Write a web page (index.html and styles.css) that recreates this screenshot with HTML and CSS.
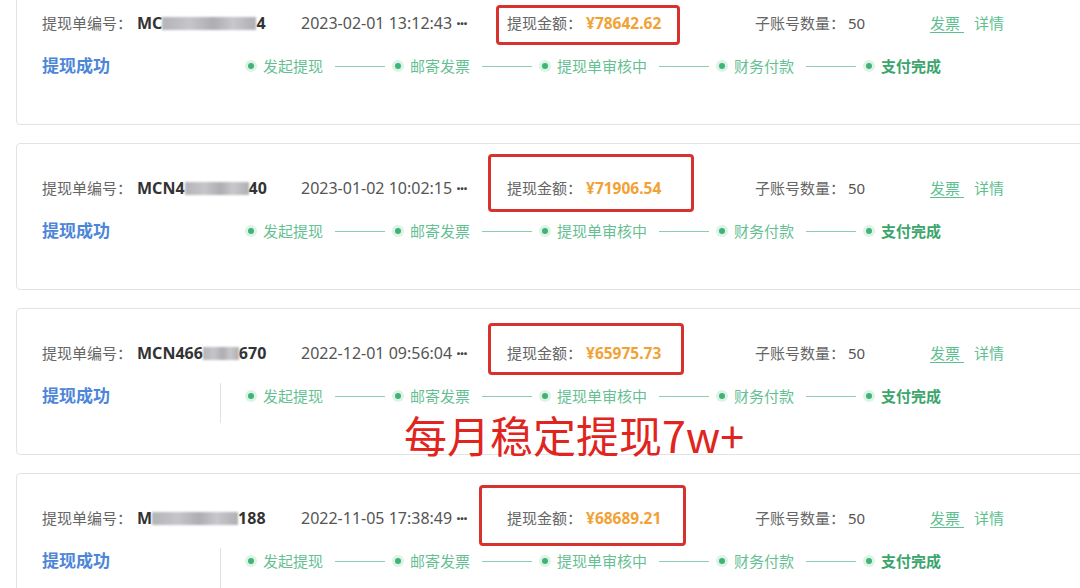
FILE: index.html
```html
<!DOCTYPE html>
<html lang="zh-CN">
<head>
  <meta charset="UTF-8" />
  <meta name="viewport" content="width=device-width, initial-scale=1.0"/>
  <title>提现记录</title>
  <link rel="stylesheet" href="styles.css">
</head>
<body>

<div class="list">

  <div class="card">
    <div class="info">
      <div class="cell no"><span class="label">提现单编号：</span><span class="val">MC<i class="mask mask-1"></i>4</span></div>
      <div class="cell time">2023-02-01 13:12:43 <span class="more">···</span></div>
      <div class="cell amount mark-1"><span class="label">提现金额：</span><span class="money">¥78642.62</span></div>
      <div class="cell subs"><span class="label">子账号数量：</span>50</div>
      <div class="cell ops"><a class="link under">发票 </a><a class="link">详情</a></div>
    </div>
    <div class="status">
      <div class="state">提现成功</div>
      <div class="steps">
        <span class="dot"></span><span class="step">发起提现</span><span class="line"></span>
        <span class="dot"></span><span class="step">邮寄发票</span><span class="line"></span>
        <span class="dot"></span><span class="step">提现单审核中</span><span class="line"></span>
        <span class="dot"></span><span class="step">财务付款</span><span class="line"></span>
        <span class="dot"></span><span class="step done">支付完成</span>
      </div>
    </div>
  </div>

  <div class="card">
    <div class="info">
      <div class="cell no"><span class="label">提现单编号：</span><span class="val">MCN4<i class="mask mask-2"></i>40</span></div>
      <div class="cell time">2023-01-02 10:02:15 <span class="more">···</span></div>
      <div class="cell amount mark-2"><span class="label">提现金额：</span><span class="money">¥71906.54</span></div>
      <div class="cell subs"><span class="label">子账号数量：</span>50</div>
      <div class="cell ops"><a class="link under">发票 </a><a class="link">详情</a></div>
    </div>
    <div class="status">
      <div class="state">提现成功</div>
      <div class="steps">
        <span class="dot"></span><span class="step">发起提现</span><span class="line"></span>
        <span class="dot"></span><span class="step">邮寄发票</span><span class="line"></span>
        <span class="dot"></span><span class="step">提现单审核中</span><span class="line"></span>
        <span class="dot"></span><span class="step">财务付款</span><span class="line"></span>
        <span class="dot"></span><span class="step done">支付完成</span>
      </div>
    </div>
  </div>

  <div class="card split">
    <div class="info">
      <div class="cell no"><span class="label">提现单编号：</span><span class="val">MCN466<i class="mask mask-3"></i>670</span></div>
      <div class="cell time">2022-12-01 09:56:04 <span class="more">···</span></div>
      <div class="cell amount mark-3"><span class="label">提现金额：</span><span class="money">¥65975.73</span></div>
      <div class="cell subs"><span class="label">子账号数量：</span>50</div>
      <div class="cell ops"><a class="link under">发票 </a><a class="link">详情</a></div>
    </div>
    <div class="status">
      <div class="state">提现成功</div>
      <div class="steps">
        <span class="dot"></span><span class="step">发起提现</span><span class="line"></span>
        <span class="dot"></span><span class="step">邮寄发票</span><span class="line"></span>
        <span class="dot"></span><span class="step">提现单审核中</span><span class="line"></span>
        <span class="dot"></span><span class="step">财务付款</span><span class="line"></span>
        <span class="dot"></span><span class="step done">支付完成</span>
      </div>
    </div>
    <div class="slogan">每月稳定提现7w+</div>
  </div>

  <div class="card split">
    <div class="info">
      <div class="cell no"><span class="label">提现单编号：</span><span class="val">M<i class="mask mask-4"></i>188</span></div>
      <div class="cell time">2022-11-05 17:38:49 <span class="more">···</span></div>
      <div class="cell amount mark-4"><span class="label">提现金额：</span><span class="money">¥68689.21</span></div>
      <div class="cell subs"><span class="label">子账号数量：</span>50</div>
      <div class="cell ops"><a class="link under">发票 </a><a class="link">详情</a></div>
    </div>
    <div class="status">
      <div class="state">提现成功</div>
      <div class="steps">
        <span class="dot"></span><span class="step">发起提现</span><span class="line"></span>
        <span class="dot"></span><span class="step">邮寄发票</span><span class="line"></span>
        <span class="dot"></span><span class="step">提现单审核中</span><span class="line"></span>
        <span class="dot"></span><span class="step">财务付款</span><span class="line"></span>
        <span class="dot"></span><span class="step done">支付完成</span>
      </div>
    </div>
  </div>

</div>

</body>
</html>
```

FILE: styles.css
```css
html, body {
  height: 100%;
}

body {
  margin: 0;
  padding: 0;
  background: #fff;
  font-family: "Noto Sans", "Noto Sans CJK SC", sans-serif;
  font-size: 15px;
  color: #555;
  overflow: hidden;
}

.list {
  display: flex;
  flex-direction: column;
  gap: 18px;
  margin-top: -22px;
  padding-left: 16px;
}

.card {
  position: relative;
  width: 1100px;
  height: 147px;
  box-sizing: border-box;
  border: 1px solid #e3e3e3;
  border-radius: 4px;
  padding: 33px 0 0 25px;
}

.info {
  display: flex;
  align-items: center;
  height: 22px;
  line-height: 22px;
  white-space: nowrap;
}

.cell {
  position: relative;
  flex: none;
}

.no { width: 259px; }
.time { width: 206px; color: #555; font-size: 16px; }
.amount { width: 248px; }
.subs { width: 175px; }

.more {
  font-weight: 700;
  letter-spacing: -1px;
  color: #444;
}

.label {
  color: #666;
}

.no .label { margin-right: 5px; }
.amount .label { margin-right: 4px; }
.subs .label { margin-right: 3px; }

.val {
  font-weight: 700;
  color: #333;
  font-size: 16px;
}

.mask {
  display: inline-block;
  height: 13px;
  vertical-align: -1px;
  background: linear-gradient(to right, #b4b4b8, #c6c6ca 30%, #adadb2 55%, #c8c8cc 75%, #b0b0b4);
  filter: blur(1px);
}

.mask-1 { width: 94px; }
.mask-2 { width: 64px; }
.mask-3 { width: 36px; }
.mask-4 { width: 86px; }

.money {
  font-weight: 700;
  font-size: 15.5px;
  color: #f2a134;
}

/* red annotation boxes */
.amount::after {
  content: "";
  position: absolute;
  border: 3px solid #d8322e;
  border-radius: 4px;
  box-sizing: border-box;
}

.mark-1::after { left: -11px; top: -7px; width: 184px; height: 40px; }
.mark-2::after { left: -19px; top: -23px; width: 206px; height: 58px; }
.mark-3::after { left: -19px; top: -19px; width: 196px; height: 52px; }
.mark-4::after { left: -28px; top: -22px; width: 207px; height: 61px; }

.link {
  color: #5dbf8f;
  cursor: pointer;
}

.link.under {
  text-decoration: underline;
  text-underline-offset: 3px;
  margin-right: 10px;
}

.status {
  display: flex;
  align-items: flex-start;
  margin-top: 21px;
  line-height: 22px;
}

.state {
  width: 178px;
  flex: none;
  font-size: 17px;
  font-weight: 700;
  color: #4d86d9;
}

.steps {
  display: flex;
  align-items: center;
  height: 22px;
  padding-left: 25px;
  white-space: nowrap;
}

.split .steps {
  border-left: 1px solid #e2e2e2;
  padding-left: 24px;
  margin-top: -2px;
  padding-top: 2px;
  padding-bottom: 16px;
}

.dot {
  width: 12px;
  height: 12px;
  border-radius: 50%;
  background: #dcf3e6;
  position: relative;
  flex: none;
}

.dot::after {
  content: "";
  position: absolute;
  left: 3px;
  top: 3px;
  width: 6px;
  height: 6px;
  border-radius: 50%;
  background: #3fb477;
}

.step {
  margin-left: 6px;
  color: #66bf93;
}

.step.done {
  font-weight: 700;
  color: #3ba56c;
}

.line {
  width: 50px;
  height: 1px;
  background: #8ccfae;
  margin: 0 7px 0 12px;
  flex: none;
}

.slogan {
  position: absolute;
  left: 387px;
  top: 108px;
  font-family: "Noto Sans CJK SC", sans-serif;
  font-size: 43px;
  line-height: 35px;
  color: #e0251f;
  white-space: nowrap;
}
```
